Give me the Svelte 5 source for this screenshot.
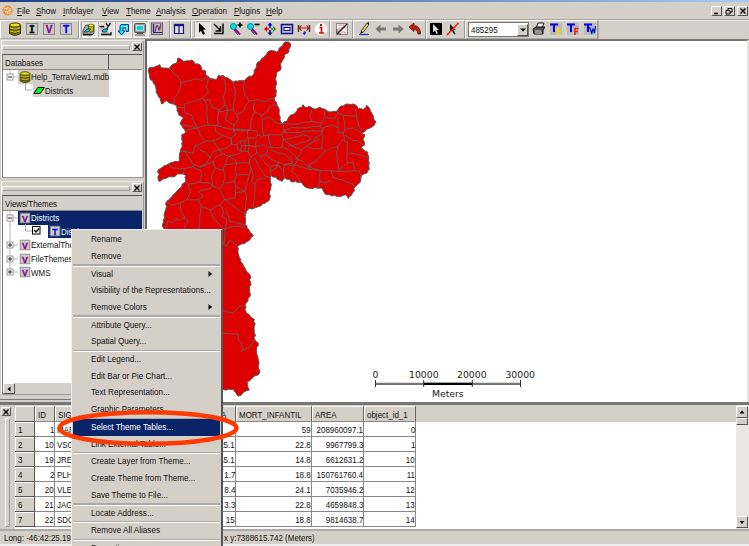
<script>
  const menus = [
    ['File', 19], ['Show', 27], ['Infolayer', 39], ['View', 24], ['Theme', 30],
    ['Analysis', 36], ['Operation', 42], ['Plugins', 32], ['Help', 24]
  ];

  const toolGroups = [
    { width: 79, pad: 6, icons: ['db', 'letterI', 'letterV', 'letterT'] },
    { width: 91, pad: 1, icons: ['dbview', 'viewy', 'down', 'monitor', 'graph'], pressed: ['dbview', 'viewy', 'down', 'monitor'] },
    { width: 21, pad: 0, icons: ['columns'] },
    { width: 139, pad: 2, icons: ['arrow', 'corner', 'zoomin', 'zoomout', 'pan', 'extent', 'measure', 'info'], pressed: ['arrow'] },
    { width: 23, pad: 3, icons: ['nodraw'] },
    { width: 73, pad: 2, icons: ['pencil', 'prev', 'next', 'undo'] },
    { width: 39, pad: 1, icons: ['pointer', 'nopointer'] },
    { width: 133, pad: 2, combo: '485295', icons: ['printer', 'te', 'tf', 'tw'] }
  ];

  const views = [
    { name: 'ExternalThemes' }, { name: 'FileThemes' }, { name: 'WMS' }
  ];

  const columns = ['', 'ID', 'SIGLA', 'A', 'MORT_INFANTIL', 'AREA', 'object_id_1'];
  const rows = [
    [1, 1, 'MAR', '', '59', '208960097.1', '0'],
    [2, 10, 'VSO', '25.1', '22.8', '9967799.3', '1'],
    [3, 19, 'JRE', '45.1', '14.8', '6612631.2', '10'],
    [4, 2, 'PLH', '1.7', '18.8', '150761760.4', '11'],
    [5, 20, 'VLE', '8.4', '24.1', '7035946.2', '12'],
    [6, 21, 'JAG', '3.3', '22.8', '4659848.3', '13'],
    [7, 22, 'SDO', '15', '18.8', '9814638.7', '14']
  ];

  const popup = [
    ['Rename', 'Remove'],
    ['Visual>', 'Visibility of the Representations...', 'Remove Colors>'],
    ['Attribute Query...', 'Spatial Query...'],
    ['Edit Legend...', 'Edit Bar or Pie Chart...', 'Text Representation...', 'Graphic Parameters...'],
    ['Select Theme Tables...', 'Link External Table...'],
    ['Create Layer from Theme...', 'Create Theme from Theme...', 'Save Theme to File...'],
    ['Locate Address...'],
    ['Remove All Aliases'],
    ['Properties...']
  ];

  const outline = '420,12 430,12 437,20 432,42 418,50 410,72 405,98 395,104 393,165 388,180 395,195 403,215 405,245 412,257 425,250 432,236 448,228 458,212 470,208 474,200 480,208 492,205 505,212 525,208 540,213 552,222 575,220 583,208 600,200 625,198 635,203 640,212 655,214 665,202 675,215 685,240 693,252 688,262 668,272 650,285 660,290 654,305 658,322 648,330 668,342 672,360 672,388 666,405 650,412 646,432 632,445 622,465 610,482 602,470 575,475 540,468 532,450 488,450 465,432 445,432 420,420 412,430 378,412 377,455 372,488 335,508 308,515 300,535 300,560 312,575 325,594 305,611 277,626 287,671 300,690 315,711 315,776 300,801 305,826 328,844 330,906 340,916 334,935 340,964 343,1006 325,1018 305,1031 313,1056 280,1074 265,1054 235,1054 150,1000 100,700 60,575 52,565 60,520 65,490 100,455 122,432 122,412 105,408 60,422 42,430 40,395 70,378 104,368 106,340 112,325 110,290 122,282 105,258 115,240 100,230 95,205 85,198 65,188 50,198 38,170 30,140 14,118 12,90 45,80 50,90 72,92 85,78 95,75 98,60 115,70 140,66 150,78 165,80 170,95 182,98 183,112 195,122 215,125 220,112 235,112 265,132 298,128 308,118 325,110 335,78 375,38 395,42 420,12';

  const borders = [
    '72,92 88,108 98,115 108,135 103,160 88,178 85,198',
    '108,135 135,128 150,122 170,128 190,117',
    '190,122 185,150 190,165 172,180 150,190 120,196 118,208 95,208',
    '118,208 120,225 140,232 145,248 158,268',
    '172,180 185,200 185,230 190,262',
    '175,186 195,185 202,210 222,216 240,200 235,175 242,158 240,130 232,112',
    '265,132 272,160 268,190 265,215 248,218 240,200',
    '298,128 294,150 300,172 312,188 302,205 295,220 275,228 265,215',
    '312,188 340,185 360,192 378,182 388,180',
    '330,190 325,210 330,222 350,232 370,218 372,208 385,200 395,202',
    '275,228 280,245 268,262 265,275 315,275 320,240 330,222',
    '350,232 352,250 355,290',
    '355,245 370,238 390,252 405,258 412,257',
    '222,216 218,240 220,260 210,265',
    '248,218 240,245 255,255 268,262', '222,222 235,220 248,218',
    '105,258 120,262 158,268 180,262 210,262 240,270 265,275',
    '158,268 165,290 180,310 165,318 150,322 145,345 120,340 106,340',
    '122,282 130,275 158,270',
    '180,310 205,308 225,300 232,292 212,280 210,265',
    '205,308 210,320 225,335 245,330 260,318 258,300 232,292',
    '150,322 165,335 185,345 195,360 185,375 165,388 145,380 130,358 120,340',
    '225,335 205,340 195,360',
    '225,335 232,348 250,355 270,365 275,375 295,375 312,375 318,358 310,340 290,340 275,350 250,355',
    '265,275 272,290 260,300 258,318 275,320 285,310 300,308 308,300 308,278 265,278',
    '308,300 330,302 338,290 335,278 308,278', '338,290 350,295 372,290 370,300 378,328',
    '275,320 278,335 290,340', '285,310 290,325 288,340', '300,308 302,325 300,340', '310,300 312,320 310,340', '288,325 312,322 330,325 335,305',
    '330,325 355,320 372,330 378,328 410,330 415,305 410,290 372,290',
    '330,325 335,345 345,355 362,350 370,335',
    '318,358 328,350 335,345', '328,360 345,390 362,415 375,420', '345,355 360,375 375,385 378,412',
    '362,350 378,365 400,372 420,380 445,385',
    '378,335 400,345 420,350 440,365 442,375 420,380',
    '410,290 415,280 440,268 480,270 505,265 525,265 530,255 500,250 495,235 500,215',
    '412,257 450,258 500,250', '415,262 420,285 470,282 500,278 530,280',
    '415,305 440,300 475,290 492,295 498,305 480,312 445,322 430,325',
    '410,325 430,335 450,352 460,365 445,385',
    '415,305 435,318 450,328 470,335 485,325 505,312',
    '470,335 465,350 452,362 470,368 490,385 500,375',
    '505,312 510,300 530,290 535,275 525,265', '485,325 505,332 530,330 535,290',
    '505,312 525,305', '530,330 540,340 510,372 500,375 490,385 525,398 558,398 580,400 640,398 648,412 645,432',
    '540,340 560,330 578,325 595,305 608,312 605,360 608,375 588,390 580,400',
    '578,325 575,350 580,395',
    '530,280 535,268 560,262 580,270 578,285 595,285 600,275 595,232 580,222',
    '538,213 540,235 530,255', '540,240 570,240 580,222', '578,240 578,270',
    '595,232 635,235 632,212', '635,235 640,260 650,278', '600,275 625,270 650,285',
    '600,290 620,305 640,310 655,322', '595,285 598,305', '608,350 620,345 650,352 670,358',
    '608,375 625,372 630,395', '490,385 495,395 525,398', '525,398 525,425 520,448', '558,398 565,420 590,425 625,440 632,445', '525,430 540,435 560,425',
    '445,385 440,400 455,412 465,432', '442,378 480,390 495,395', '420,380 415,400 420,420', '378,385 400,380 415,400', '400,372 395,390 378,400',
    '70,378 85,390 120,392 145,385', '145,380 150,392 165,395 170,410 165,432 130,440 122,432', '120,392 115,410',
    '165,388 205,372 210,360 232,348', '205,372 212,390 200,415 205,445 225,452 235,435 240,415 235,395 240,380 250,355',
    '232,395 212,390', '240,380 275,375 270,400 275,410 312,410 318,390 312,375',
    '275,410 268,430 240,435', '268,430 272,445 300,460 305,440 312,410', '318,390 325,410 320,430 330,440 335,425 362,420', '330,440 328,480 325,508',
    '165,432 195,435 205,445', '130,440 135,465 125,485 105,495 80,502 65,490', '125,485 160,485 175,475 160,460 195,452 200,445',
    '160,485 170,505 195,515 225,500 240,485 225,455', '170,505 165,530 162,575',
    '240,485 270,480 272,445', '270,465 300,460 305,480 300,535', '240,485 260,500 280,515 300,530', '225,500 235,520 230,535 245,545 240,575', '195,515 205,540 225,560 240,575 262,565 300,566',
    '105,495 108,520 120,540 128,550 115,575', '120,540 100,548 95,540 85,555 68,550 60,575', '245,520 255,550 275,555 300,560',
    '240,575 238,620 245,627 252,608 262,610 277,626',
    '235,818 250,822 265,824 280,808 300,801', '235,886 262,888 280,888 280,905 290,915 294,930 288,942 310,930 330,906'
  ];

  // Small pseudo-random offsets give the boundaries an irregular, surveyed look.
  function trace(text, step, amount) {
    const pts = text.split(' ').map((p) => p.split(',').map(Number));
    let d = `M${pts[0]}`;
    for (let i = 1; i < pts.length; i++) {
      const [ax, ay] = pts[i - 1];
      const [bx, by] = pts[i];
      const len = Math.hypot(bx - ax, by - ay);
      const n = Math.max(1, Math.round(len / step));
      for (let k = 1; k < n; k++) {
        const h = Math.abs(Math.sin(ax * 12.9898 + by * 78.233 + k * 37.719) * 43758.5453) % 1;
        const j = (h - 0.5) * 2 * amount;
        d += `L${(ax + ((bx - ax) * k) / n - ((by - ay) / len) * j).toFixed(1)},${(ay + ((by - ay) * k) / n + ((bx - ax) / len) * j).toFixed(1)}`;
      }
      d += `L${bx},${by}`;
    }
    return d;
  }
</script>

{#snippet box(letter, color)}
  <rect x="2.5" y="2.5" width="11" height="11" fill="#ccc" stroke="#888" />
  <text class="glyph" x="8" y="12" text-anchor="middle" fill={color} stroke={color} stroke-width=".3">{letter}</text>
{/snippet}

{#snippet icon(name)}
  <svg class="icon" viewBox="0 0 16 16" width="16" height="16">
    {#if name === 'db'}
      <path d="M2.5 4v8.500q5.500 3.500 11 0V4z" fill="#8c8400" stroke="#332f00" />
      <ellipse cx="8" cy="4" rx="5.500" ry="2" fill="#e8dc20" stroke="#443f00" />
      <path d="M3 7q5 2.600 10 0M3 10q5 2.600 10 0" fill="none" stroke="#d8cc20" stroke-width=".9" />
      <path d="M3 8.200q5 2.600 10 0M3 11.200q5 2.600 10 0" fill="none" stroke="#222" stroke-width=".7" />
    {:else if name === 'letterI'}
      {@render box('I', '#000')}
      <path d="M5.500 5h5M5.500 11.500h5" stroke="#000" stroke-width="1.300" />
    {:else if name === 'letterV'}
      {@render box('V', '#880088')}
    {:else if name === 'letterT'}
      {@render box('T', '#0000ee')}
    {:else if name === 'dbview'}
      <path d="M2 9l3-5h8v8l-2 2H2z" fill="#aaa" stroke="#222" stroke-width=".7" />
      <path d="M7.500 4.500v6q2.500 1.500 5 0v-6z" fill="#c8bc00" stroke="#443f00" stroke-width=".8" />
      <ellipse cx="10" cy="4.500" rx="2.500" ry="1.300" fill="#ffff50" stroke="#443f00" stroke-width=".6" />
      <path d="M3 11l3-3h4l-3 3z" fill="#00d8d8" stroke="#111" stroke-width=".7" />
      <path d="M2 13.500h10" stroke="#111" stroke-width="1.300" />
    {:else if name === 'viewy'}
      <path d="M1.500 5h5l5 8h-8z" fill="#bbb" />
      <path d="M8 2l2 3.500L12.500 2M10 5.500L8.500 9" stroke="#111" stroke-width="1.400" fill="none" />
      <path d="M1.500 5.500H6M3 13.500h10V11" stroke="#111" fill="none" stroke-width="1.300" />
      <path d="M4 10l2-2h4l-2 3H5z" fill="#00d8d8" stroke="#111" stroke-width=".7" />
    {:else if name === 'down'}
      <path d="M6 3.500h7.500v7H11V7H8v3h2l-3.500 4L3 10h2V5z" fill="#00e8f0" stroke="#003a88" />
      <path d="M8.500 5.500H12V9" stroke="#ddd" fill="none" />
    {:else if name === 'monitor'}
      <rect x="2.500" y="2.500" width="11" height="9" rx="1" fill="#999" stroke="#555" />
      <rect x="4.500" y="4.500" width="7" height="5" fill="#00d8d8" stroke="#eee" stroke-width=".7" />
      <path d="M5 12.500h6M3 14h10" stroke="#555" />
    {:else if name === 'graph'}
      <rect x="2.500" y="2" width="11" height="11.500" fill="#c4b8b8" stroke="#666" />
      <path d="M4.500 12V3M4 11.500h9" stroke="#202078" stroke-width="1.200" />
      <path d="M6 11l1.500-6 1-1 1.500 5 2-6" stroke="#3030b0" fill="none" />
      <path d="M6 9c1-7 2.500-5 3.500-1s2 1 2.500-3" stroke="#c44" fill="none" stroke-width=".8" />
    {:else if name === 'columns'}
      <path d="M3.500 3.500h9v9h-9zM8 3v10" fill="#ddd" stroke="#151584" stroke-width="1.200" />
      <path d="M3 4h10" stroke="#151584" stroke-width="2.400" />
    {:else if name === 'arrow'}
      <path d="M5 2l7 6.500-3 .3 2 4-2 1-2-4-2 2z" fill="#000" />
    {:else if name === 'corner'}
      <path d="M3 3l7 7M12 2.500v10H3M4.500 10h5V5" stroke="#111" stroke-width="1.500" fill="none" />
    {:else if name === 'zoomin' || name === 'zoomout'}
      <circle cx="5.500" cy="5.500" r="3" fill="#00e0e8" stroke="#008890" />
      <path d="M7 8l5 5.500" stroke="#a000a0" stroke-width="2" />
      <path d="M6 9l4 5" stroke="#222" stroke-width="1" />
      <path d={name === 'zoomin' ? 'M9.500 4h5M12 1.500v5' : 'M9.500 3.500h5'} stroke="#000" stroke-width="1.600" />
    {:else if name === 'pan'}
      <path d="M8 1.500l2.500 3h-5zM7.200 4h1.600v3H7.200z" fill="#0000c0" />
      <path d="M8 14.500l-2.500-3h5zM7.200 9h1.600v3H7.200z" fill="#0000a0" />
      <path d="M2 8l3-3v6zM4 7.200h3v1.600H4z" fill="#e80000" />
      <path d="M14 8l-3-3v6zM9 7.200h3v1.600H9z" fill="#008000" />
    {:else if name === 'extent'}
      <rect x="2.500" y="3.500" width="11" height="9" fill="#b8bde0" stroke="#101080" stroke-width="1.500" />
      <rect x="5" y="6.500" width="6" height="3" fill="#eee" stroke="#101080" />
    {:else if name === 'measure'}
      <path d="M2.500 4v7M13.500 4v7" stroke="#333" stroke-width="1.300" />
      <path d="M3 7h10M5.500 4.500L3 7l2.500 2.500M10.500 4.500L13 7l-2.500 2.500" stroke="#c02020" stroke-width="1.100" fill="none" />
      <path d="M7 13l1-3 2 1-1 3z" fill="#2020e0" />
    {:else if name === 'info'}
      <circle cx="8" cy="8" r="6" fill="#fff" stroke="#eee" />
      <path d="M6.500 6.500H8.500V11.500M6 12h5" stroke="#e00000" stroke-width="1.600" fill="none" />
      <rect x="7" y="3" width="2" height="2" fill="#e00000" />
    {:else if name === 'nodraw'}
      <rect x="2.500" y="2.500" width="11" height="11" fill="#f4f0ee" stroke="#888" />
      <path d="M4 4h6v3H5v4h6v2" fill="none" stroke="#e89090" />
      <path d="M3 13L13 3" stroke="#222" stroke-width="1.500" />
      <path d="M3 8v5h4" stroke="#444" fill="none" />
    {:else if name === 'pencil'}
      <path d="M5 10l6-8 2 1.500-6 8z" fill="#f0e020" stroke="#1010a0" stroke-width=".8" />
      <path d="M11 2l2-1v3M5 10l-1 3 3-1.500" fill="#222" />
      <path d="M3 13.500h10" stroke="#2030b0" stroke-width="1.200" />
    {:else if name === 'prev'}
      <path d="M2.500 8l5-4.500v3H13v3H7.500v3z" fill="#777" />
    {:else if name === 'next'}
      <path d="M13.500 8l-5-4.500v3H3v3h5.500v3z" fill="#777" />
    {:else if name === 'undo'}
      <path d="M2 6l5-4v2.500Q13.500 5 13.500 13H11Q11 8.500 7 8v2.500z" fill="#e01000" stroke="#222" stroke-width=".8" />
    {:else if name === 'pointer'}
      <rect x="2" y="2" width="12" height="12" fill="#000" />
      <path d="M5 3l6 6H8.500l1.500 3.500-1.500.5-1.500-3.500-2 1.500z" fill="#ddd" />
    {:else if name === 'nopointer'}
      <path d="M5 3l6 6H8.500l2 4-1.500.5-2-4-2 1.500z" fill="#111" />
      <path d="M13.500 2L2 14" stroke="#f01818" stroke-width="1.600" />
    {:else if name === 'printer'}
      <path d="M5 7l2-5h6l-2 5z" fill="#eee" stroke="#222" />
      <path d="M2 8l3-2h9l-2 3v4H3z" fill="#555" stroke="#111" />
      <path d="M4 10h6M4 12h7" stroke="#ddd" />
    {:else}
      <rect x="2" y="2" width="12" height="12" fill="#bbb" />
      <path d="M2 3.500h8M6 3v8" stroke="#0000e8" stroke-width="2" />
      {#if name === 'te'}
        <path d="M13 7.500H9.500v5.500H13M10 10.200h2.500" fill="none" stroke="#eee000" stroke-width="1.400" />
      {:else if name === 'tf'}
        <path d="M13.500 7.500H10V14M10 10.500h3" fill="none" stroke="#e82020" stroke-width="1.600" />
      {:else}
        <path d="M8 7l2 6 3-1 1-6-3 3z" fill="#20a8e8" />
        <path d="M7.500 6l2 6 1.500-4 1.500 4 1-7" fill="none" stroke="#1010b0" stroke-width="1.200" />
      {/if}
    {/if}
  </svg>
{/snippet}

{#snippet cross()}
  <svg viewBox="0 0 8 8" width="8" height="8"><path d="M1.500 1.500l5 5M6.500 1.500l-5 5" stroke="#000" stroke-width="1.400" /></svg>
{/snippet}

{#snippet expander(open, last)}
  <svg class="exp" viewBox="0 0 16 14" width="16" height="14">
    <path d={last ? 'M8 0v7h8' : 'M8 0v14M8 7h8'} stroke="#aaa" stroke-width=".8" fill="none" />
    <rect x="5" y="4" width="6" height="6" fill="#fff" stroke="#999" />
    <path d={open ? 'M6 7h4' : 'M6 7h4M8 5v4'} stroke="#222" />
  </svg>
{/snippet}

<div class="window">
  <div class="title"></div>
  <div class="menubar">
    <svg class="logo" viewBox="0 0 11 11" width="11" height="11">
      <circle cx="5.500" cy="5.500" r="5" fill="#f09038" />
      <path d="M2 3l3 1 1-2M7 3l2 2-3 1M3 7l2-1 1 3M7 8l2-1" stroke="#fff" fill="none" />
    </svg>
    {#each menus as [label, w]}
      <div class="menu" style:width="{w}px"><span class="t"><u>{label[0]}</u>{label.slice(1)}</span></div>
    {/each}
    <div class="mdi">
      <b><svg viewBox="0 0 8 8" width="8" height="8"><path d="M1 6.500h4" stroke="#000" stroke-width="1.500" /></svg></b>
      <b><svg viewBox="0 0 8 8" width="8" height="8"><path d="M3 3V1.500h4v3.500H5M1 3.500h4V7H1z" fill="none" stroke="#000" /></svg></b>
      <b class="last">{@render cross()}</b>
    </div>
  </div>

  <div class="toolbar">
    {#each toolGroups as g}
      <div class="group" style:width="{g.width}px" style:padding-left="{g.pad}px">
        {#if g.combo}
          <div class="combo"><span class="t">{g.combo}</span><b><svg viewBox="0 0 8 8" width="8" height="8"><path d="M1 2.500h6L4 5.500z" /></svg></b></div>
        {/if}
        {#each g.icons as name}
          <div class="tool" class:pressed={g.pressed?.includes(name)}>{@render icon(name)}</div>
        {/each}
      </div>
    {/each}
    <div class="rest"></div>
  </div>

  <div class="middle">
    <div class="docks">
      <section class="dock first">
        <div class="grip"><i></i><b>{@render cross()}</b></div>
        <div class="panel">
          <div class="head"><div class="dbcol"><span class="t">Databases</span></div></div>
          <div class="tree">
            <div class="row">{@render expander(true, true)}<div class="label sel wide">{@render icon('db')}<span class="t">Help_TerraView1.mdb</span></div></div>
            <div class="row child">
              <svg viewBox="0 0 8 14" width="8" height="14"><path d="M.5 0v7H7" stroke="#aaa" fill="none" /></svg>
              <div class="label sel narrow">
                <svg viewBox="0 0 12 12" width="12" height="12"><path d="M.8 9.500l4-6h6.500l-4 6z" fill="#00f018" stroke="#111" /></svg>
                <span class="t">Districts</span>
              </div>
            </div>
          </div>
        </div>
      </section>
      <section class="dock second">
        <div class="grip"><i></i><b>{@render cross()}</b></div>
        <div class="panel">
          <div class="head"><span class="t">Views/Themes</span></div>
          <div class="tree">
            <div class="row">{@render expander(true)}<div class="label active">{@render icon('letterV')}<span class="t">Districts</span></div></div>
            <div class="row theme">
              <svg viewBox="0 0 22 14" width="22" height="14"><path d="M7 0v14" stroke="#aaa" stroke-width=".8" /></svg>
              <svg viewBox="0 0 16 14" width="16" height="14">
                <path d="M.5 0v7H7" stroke="#aaa" fill="none" />
                <rect x="7.500" y="2.500" width="7.500" height="7.500" fill="#fff" stroke="#000" />
                <path d="M9 6l2 2 3-3.500" stroke="#000" stroke-width="1.400" fill="none" />
              </svg>
              <div class="label active">{@render icon('letterT')}<span class="t">Districts</span></div>
            </div>
            {#each views as v, i}
              <div class="row">{@render expander(false, i === 2)}<div class="label plain">{@render icon('letterV')}<span class="t">{v.name}</span></div></div>
            {/each}
          </div>
          <div class="hscroll"><b><svg viewBox="0 0 8 8" width="8" height="8"><path d="M5.500 1.500v5L2.500 4z" /></svg></b></div>
        </div>
      </section>
    </div>

    <div class="map">
      <svg viewBox="147 41 600 361" width="600" height="361">
        <g transform="translate(145 38) scale(.33333)">
          <path d={trace(outline, 7, 2.8)} fill="#de0000" stroke="#555" stroke-width="3" />
          {#each borders as line}
            <path d={trace(line, 8, 1.5)} fill="none" stroke="#70605c" stroke-width="2.800" />
          {/each}
        </g>
        <path d="M375.500 383.800h145" stroke="#777" stroke-width="2.200" />
        <path d="M423.500 383.800h49" stroke="#000" stroke-width="2.200" />
        <path d="M375.500 380v7M423.700 380v7M472.300 380v7M520.500 380v7" stroke="#333" />
        <g class="scale">
          <text x="375.500" y="377.500">0</text>
          <text x="423.800" y="377.500">10000</text>
          <text x="471.800" y="377.500">20000</text>
          <text x="520.200" y="377.500">30000</text>
          <text x="447.800" y="397.300">Meters</text>
        </g>
      </svg>
    </div>
  </div>

  <div class="bottom">
    <div class="side"><b>{@render cross()}</b><i></i></div>
    <div class="grid">
      <div class="tr header">
        {#each columns as c, i}<div class="c{i}"><span class="t">{c}</span></div>{/each}
      </div>
      {#each rows as r}
        <div class="tr">
          {#each r as cell, i}<div class="c{i}"><span class="t">{cell}</span></div>{/each}
        </div>
      {/each}
    </div>
    <div class="vscroll">
      <b><svg viewBox="0 0 8 8" width="8" height="8"><path d="M1.500 5.500h5L4 2.500z" /></svg></b>
      <b class="thumb"></b>
      <b class="end"><svg viewBox="0 0 8 8" width="8" height="8"><path d="M1.500 3h5L4 6z" /></svg></b>
    </div>
  </div>

  <div class="status"><div class="long"><span class="t">Long: -46:42:25.19</span></div><span class="t">x y:7388615.742 (Meters)</span></div>

  <div class="popup">
    {#each popup as group, gi}
      {#if gi}<hr />{/if}
      {#each group as item}
        <div class="item" class:hl={item.startsWith('Select')}>
          <span class="t">{item.replace('>', '')}</span>
          {#if item.endsWith('>')}<svg viewBox="0 0 5 8" width="5" height="8"><path d="M.5 1v6L4.200 4z" /></svg>{/if}
        </div>
      {/each}
    {/each}
  </div>
  <svg class="ring" viewBox="0 0 190 44" width="190" height="44"><ellipse cx="95" cy="22" rx="88.500" ry="15.800" fill="none" stroke="#ff3a00" stroke-width="4.500" /></svg>
</div>

<style>
  :global(body) { overflow: hidden; }
  .window, .window * { box-sizing: border-box; }
  .window {
    position: relative; width: 749px; height: 546px; overflow: hidden; background: #d4d0c8; color: #111;
    display: flex; flex-direction: column; white-space: nowrap;
    font: 9.600px 'Liberation Sans', Arial, sans-serif;
  }
  svg { display: block; flex: none; }
  u { text-underline-offset: 1px; text-decoration-thickness: 1px; }
  .t { display: inline-block; flex: none; transform: scaleX(.83); transform-origin: left; }
  .glyph { font: bold 10px 'Liberation Sans', sans-serif; }
  .title { height: 2px; flex: none; background: linear-gradient(90deg, #1c3f88, #a6caf0); }
  .menubar { height: 18px; flex: none; display: flex; align-items: center; border-bottom: 1px solid #aaa69e; padding-left: 2px; }
  .logo { margin-right: 4px; }
  .menu { flex: none; line-height: 18px; }
  .mdi { margin-left: auto; display: flex; gap: 1.500px; padding-right: 1px; }
  b { display: flex; align-items: center; justify-content: center; background: #d4d0c8; border: 1px solid; border-color: #fff #555 #555 #fff; flex: none; }
  .mdi b { width: 11px; height: 10px; }
  .mdi .last { margin-left: 1px; }
  .toolbar { height: 19px; flex: none; display: flex; }
  .group { display: flex; align-items: center; border-left: 1px solid #fff; border-right: 1px solid #999; border-top: 1px solid #fff; border-bottom: 1px solid #aaa; flex: none; }
  .rest { flex: 1; border-left: 1px solid #aaa; border-top: 1px solid #eee; }
  .tool { width: 17px; height: 17px; flex: none; }
  .pressed { background: #e8e5e0; border: 1px solid; border-color: #aaa #fff #fff #aaa; }
  .pressed .icon { margin: -1px; }
  .combo { width: 61px; height: 15px; flex: none; background: #fff; border: 1px solid #777; display: flex; justify-content: space-between; align-items: center; padding: 0 0 0 2px; margin-right: 2px; }
  .combo b { width: 11px; height: 12px; }

  .middle { height: 363px; flex: none; display: flex; align-items: flex-start; }
  .docks { width: 145px; height: 361px; flex: none; padding: 1px 0 0 1px; display: flex; flex-direction: column; gap: 3px; border-bottom: 1px solid #777; }
  .dock { width: 143px; border: 1px solid; border-color: #eee #999 #999 #fff; flex: none; display: flex; flex-direction: column; }
  .first { height: 138px; }
  .second { height: 214px; }
  .grip { height: 13px; flex: none; display: flex; padding-top: 1px; gap: 2px; }
  .grip i { width: 128px; height: 5px; margin-top: 3px; border: 1px solid; border-color: #fff #999 #999 #fff; }
  .grip b { width: 10px; height: 9px; }
  .panel { flex: 1; margin-right: 1px; background: #fff; border-left: 1px solid #777; border-top: 1px solid #555; display: flex; flex-direction: column; min-height: 0; }
  .head { height: 15px; flex: none; background: #d4d0c8; line-height: 15px; padding-left: 2px; border-bottom: 1px solid #888; }
  .dbcol { width: 104px; border-right: 1px solid #555; height: 14px; }
  .tree { flex: 1; min-height: 0; }
  .row { display: flex; height: 13.600px; align-items: center; }
  .label { display: flex; align-items: center; height: 100%; }
  .exp { margin-left: -1px; }
  .sel { background: #d4d0c8; }
  .wide { width: 91px; }
  .wide .icon { margin-right: -1px; width: 14px; height: 14px; }
  .child { padding-left: 22px; }
  .narrow { width: 76px; gap: 0; }
  .active { flex: 1; min-width: 0; background: #0a246a; color: #fff; }
  .active .icon, .plain .icon { width: 14px; height: 14px; margin-right: -1px; }
  .theme .active { margin-left: 7px; }
  .hscroll { height: 12px; flex: none; background: #d4d0c8; border-top: 1px solid #fff; }
  .hscroll b { width: 12px; height: 11px; }
  .map { flex: 1; height: 363px; background: #fff; border-left: 2px solid #666; border-top: 2px solid #777; border-right: 2px solid #e4e2dc; overflow: hidden; }
  .scale text { font: 9.300px 'DejaVu Sans', sans-serif; text-anchor: middle; fill: #222; }

  .bottom { height: 127px; flex: none; display: flex; border-top: 3px solid #777; background: #fff; }
  .side { width: 15px; flex: none; background: #d4d0c8; display: flex; flex-direction: column; align-items: center; padding-top: 2px; gap: 2px; }
  .side b { width: 10px; height: 9px; margin-right: 3px; }
  .side i { width: 5px; flex: 1; border: 1px solid; border-color: #fff #999 #999 #fff; margin-bottom: 2px; }
  .grid { flex: 1; padding-top: 1px; display: flex; flex-direction: column; background: linear-gradient(#d4d0c8 17px, #fff 17px); }
  .tr { display: flex; height: 15.050px; flex: none; line-height: 16px; }
  .tr > div { border-right: 1px solid #888; border-bottom: 1px solid #888; flex: none; display: flex; justify-content: flex-end; }
  .tr .t { transform-origin: right; }
  .tr .c0, .tr .c2, .header > div { justify-content: flex-start !important; }
  .tr .c0 .t, .tr .c2 .t, .header .t { transform-origin: left; }
  .header { height: 16px; line-height: 17px; }
  .header > div { background: #d4d0c8; border-right-color: #666 !important; box-shadow: inset 1px 1px #fff; padding-left: 3px; }
  .tr .c0 { width: 20px; background: #d4d0c8; padding-left: 3px; box-shadow: inset 1px 1px #fff; border-color: #555; }
  .c1 { width: 20px; }
  .c2 { width: 40px; padding-left: 2px; }
  .c3 { width: 141px; }
  .header .c3 { justify-content: flex-end !important; padding-right: 8px; }
  .c4 { width: 76px; }
  .c5 { width: 52px; }
  .c6 { width: 52px; }
  .vscroll { width: 13px; flex: none; background: #e9e7e2; display: flex; flex-direction: column; padding: 1px 1px 1px 0; }
  .vscroll b { height: 12px; }
  .vscroll .thumb { height: 7px; }
  .vscroll .end { margin-top: auto; }
  .status { height: 17px; flex: none; border-top: 2px solid #aaa; border-bottom: 2px solid #eee; display: flex; line-height: 14px; padding-left: 4px; }
  .long { width: 220px; }

  .popup { position: absolute; left: 71px; top: 229px; width: 152px; height: 330px; background: #d4d0c8; border: 1px solid; border-color: #eee #555 #555 #eee; border-right-width: 2px; padding: 1px 1px; }
  .popup .t { transform: scaleX(.845); }
  .item { height: 16.620px; line-height: 16.600px; padding: 0 7px 0 18px; display: flex; align-items: center; justify-content: space-between; }
  .hl { background: #0a246a; color: #fff; }
  hr { margin: 0; border: 0; height: 1.300px; background: #aaa; box-shadow: 0 1px #fff; }
  .ring { position: absolute; left: 52.500px; top: 406.300px; }
</style>
